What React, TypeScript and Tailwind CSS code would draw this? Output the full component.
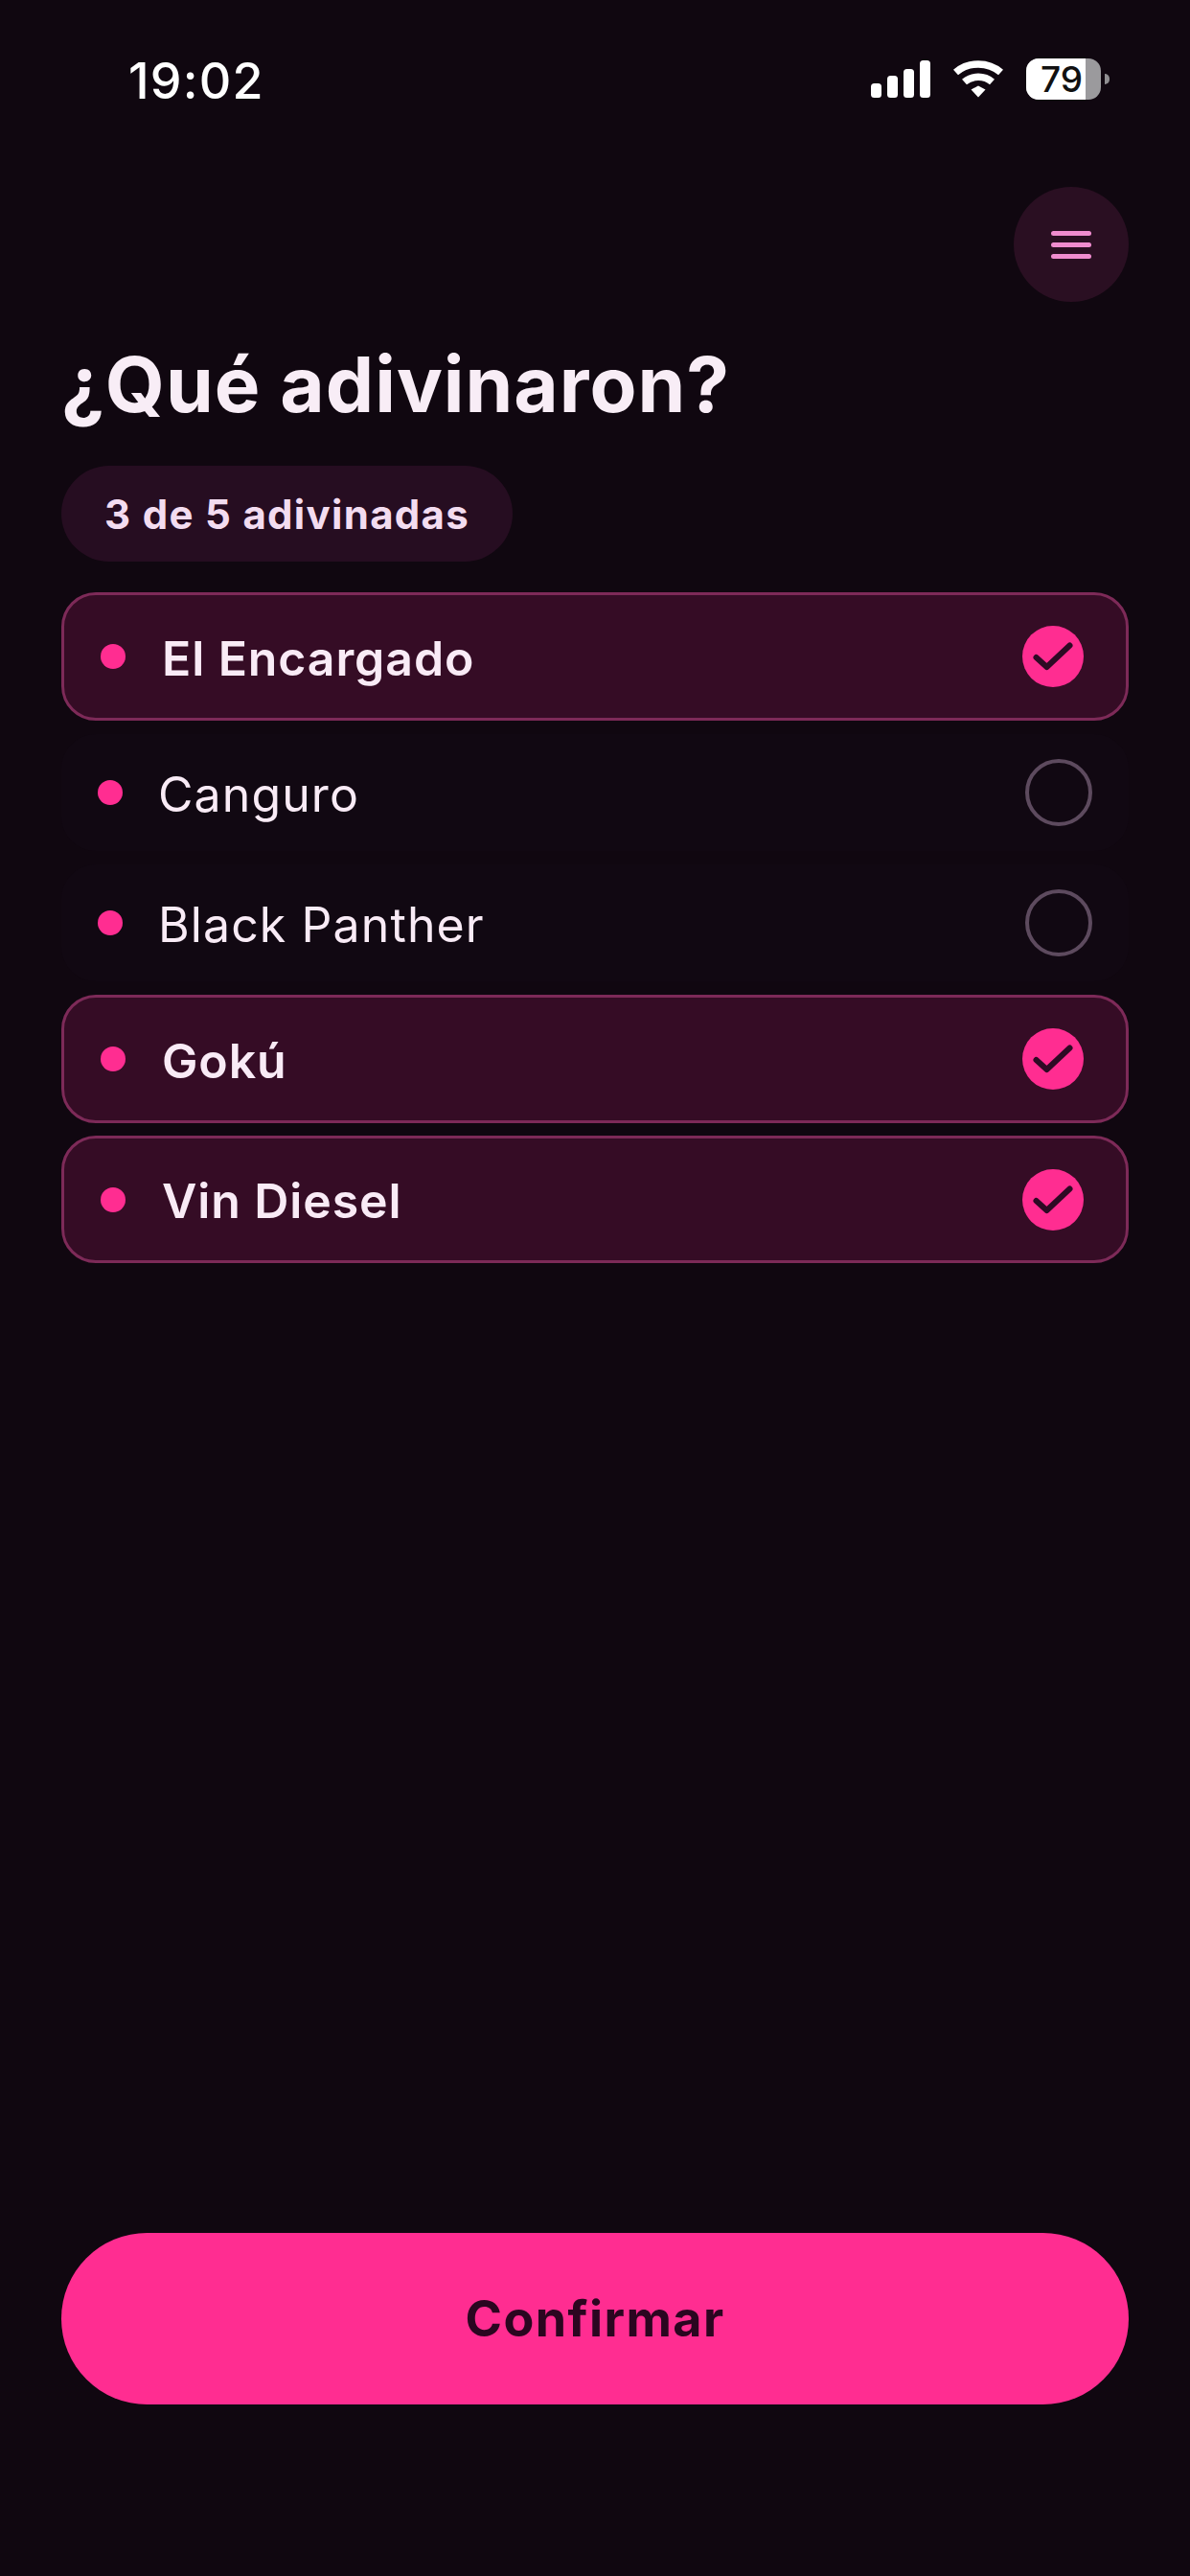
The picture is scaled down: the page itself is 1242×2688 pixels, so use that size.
const rows = [
  { label: "El Encargado", on: true },
  { label: "Canguro", on: false },
  { label: "Black Panther", on: false },
  { label: "Gokú", on: true },
  { label: "Vin Diesel", on: true },
];

function Signal() {
  return (
    <svg width="62" height="39" viewBox="0 0 62 39" fill="#ffffff">
      <rect x="0" y="24" width="11" height="15" rx="3.5" />
      <rect x="17" y="16" width="11" height="23" rx="3.5" />
      <rect x="34" y="9" width="11" height="30" rx="3.5" />
      <rect x="51" y="0" width="11" height="39" rx="3.5" />
    </svg>
  );
}

function Wifi() {
  return (
    <svg width="54" height="39" viewBox="0 0 54 39" fill="none" stroke="#ffffff" strokeWidth="7.5">
      <path d="M3.5 12.5C16.5 1 37.5 1 50.5 12.5" />
      <path d="M12.5 22.5C20.5 15.5 33.5 15.5 41.5 22.5" />
      <path d="M19.5 30.5L27 26.5L34.5 30.5L27 38.5Z" fill="#ffffff" stroke="none" />
    </svg>
  );
}

function Battery() {
  return (
    <div className="flex items-center gap-[4px]">
      <div className="relative flex h-[43px] w-[78px] overflow-hidden rounded-[13px] bg-[#9b9a9d]">
        <div className="flex h-full w-[62px] items-center justify-end bg-white pr-[3px]">
          <span className="font-['Inter',sans-serif] text-[37px] font-medium leading-none text-[#111111]">79</span>
        </div>
      </div>
      <div className="h-[11px] w-[5px] rounded-r-full bg-[#8f8e91]" />
    </div>
  );
}

function Check() {
  return (
    <div className="flex h-[64px] w-[64px] items-center justify-center rounded-full bg-[#ff2d91]">
      <svg width="64" height="64" viewBox="0 0 64 64" fill="none" stroke="#2d0a24" strokeWidth="6" strokeLinecap="round" strokeLinejoin="round">
        <path d="M14.5 33L25.5 43L49.5 20.5" />
      </svg>
    </div>
  );
}

function Row({ label, on }: { label: string; on: boolean }) {
  if (on) {
    return (
      <div className="flex h-[134px] items-center rounded-[36px] border-[3px] border-[#7d2a58] bg-[#350c25] pl-[38px] pr-[44px] last:-mt-px last:h-[133px]">
        <div className="h-[26px] w-[26px] rounded-full bg-[#ff2d91]" />
        <span className="ml-[38px] flex-1 pt-[4px] text-[50px] font-semibold tracking-[0.9px] text-[#f9ebf6]">{label}</span>
        <Check />
      </div>
    );
  }
  return (
    <div className="flex h-[122px] items-center rounded-[36px] bg-[#110812] pl-[38px] pr-[38px]">
      <div className="h-[26px] w-[26px] rounded-full bg-[#ff2d91]" />
      <span className="ml-[37px] flex-1 pt-[4px] text-[50px] font-normal tracking-[1.1px] text-[#f9ebf6]">{label}</span>
      <div className="h-[70px] w-[70px] rounded-full border-4 border-[#5d4a5e]" />
    </div>
  );
}

export default function App() {
  return (
    <div className="flex h-[2688px] w-[1242px] flex-col bg-[#100710] font-['Inter',sans-serif]">
      <div className="flex h-[165px] items-start justify-between pl-[134px] pr-[84px] pt-[54px]">
        <span className="text-[52px] font-medium leading-[62px] tracking-[1.2px] text-white">19:02</span>
        <div className="flex items-center gap-[23px] pt-[7px]">
          <Signal />
          <Wifi />
          <Battery />
        </div>
      </div>
      <div className="flex flex-1 flex-col px-[64px] pt-[30px] pb-[179px]">
        <div className="flex justify-end">
          <div className="flex h-[120px] w-[120px] flex-col items-center justify-center gap-[7px] rounded-full bg-[#2a0f22]">
            <div className="h-[5px] w-[42px] rounded-full bg-[#f08ccf]" />
            <div className="h-[5px] w-[42px] rounded-full bg-[#f08ccf]" />
            <div className="h-[5px] w-[42px] rounded-full bg-[#f08ccf]" />
          </div>
        </div>
        <h1 className="mt-[40px] text-[80px] font-bold leading-[92px] tracking-[1px] text-[#f8edf6]">¿Qué adivinaron?</h1>
        <div className="mt-[39px] flex h-[100px] w-[471px] items-center rounded-[50px] bg-[#260d21] pl-[45px]">
          <span className="text-[42px] font-bold tracking-[1.3px] text-[#f3dcf0]">3 de 5 adivinadas</span>
        </div>
        <div className="mt-[32px] flex flex-col gap-[14px]">
          {rows.map((r) => (
            <Row key={r.label} label={r.label} on={r.on} />
          ))}
        </div>
        <div className="mt-auto flex h-[179px] items-center justify-center rounded-[90px] bg-[#ff2d91]">
          <span className="text-[52px] font-bold tracking-[1.4px] text-[#2b0620]">Confirmar</span>
        </div>
      </div>
    </div>
  );
}
